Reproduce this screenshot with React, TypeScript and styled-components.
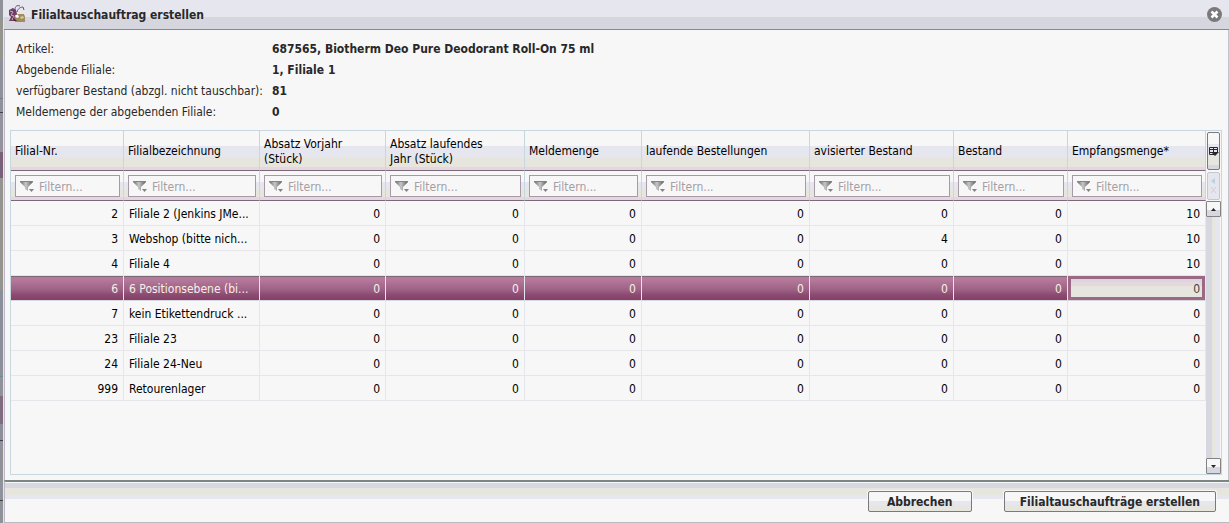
import React from 'react';
import styled, { createGlobalStyle, css } from 'styled-components';

const Global = createGlobalStyle`
  *, *::before, *::after { box-sizing: border-box; }
  body { margin: 0; background: #8e929a; }
  body, input, button { font-family: Tahoma, "DejaVu Sans Condensed", "Noto Sans", sans-serif; font-size: 12px; color: #000; }
  svg { flex: none; }
`;

const Backdrop = styled.div`
  display: flex;
  min-height: 100vh;
  padding-left: 3px;
  background: linear-gradient(
    #8f9299 0 20px, #94958c 20px 60px, #8f9299 60px 98px, #777a86 98px 99px, #8f9299 99px 112px, #3f4046 112px 113px,
    #94929c 113px 152px, #7a5f78 152px 178px, #94958f 178px 290px, #8b8f99 290px 376px, #6c8a94 376px 377px, #8f9299 377px 396px,
    #7f6c80 396px 424px, #8b8f99 424px 440px, #3f4046 440px 441px, #8f9299 441px 500px, #3f4046 500px 501px, #8f9299 501px
  );
`;
const Dialog = styled.section`
  flex: 1;
  min-width: 0;
  display: flex;
  flex-direction: column;
  border-left: 1px solid #e6e6ea;
  background: #f7f7f7;
`;
const TitleBar = styled.header`
  display: flex;
  align-items: center;
  gap: 5px;
  height: 30px;
  flex: none;
  padding: 0 7px 1px 4px;
  background: linear-gradient(#e6e6ef 0 17px, #d6d6df 17px);
  border-bottom: 1px solid #7b8e94;
`;
const Title = styled.h1`
  flex: 1;
  margin: 0;
  padding-top: 1px;
  font-size: 12px;
  line-height: 16px;
  font-weight: bold;
  color: #292829;
`;
const CloseButton = styled.button`
  padding: 0;
  border: 0;
  background: none;
  display: flex;
`;
const Body = styled.div`
  flex: 1;
  display: flex;
  flex-direction: column;
  padding: 9px 6px 5px 5px;
  border-left: 1px solid #bdb6c6;
  border-right: 1px solid #c6c3ce;
`;
const Facts = styled.dl`
  display: grid;
  grid-template-columns: 256px 1fr;
  margin: 0 0 7px 6px;
  line-height: 21px;
  color: #292829;
`;
const Term = styled.dt`white-space: nowrap;`;
const Detail = styled.dd`margin: 0; font-weight: bold;`;

const GridFrame = styled.div`
  flex: 1;
  display: flex;
  border: 1px solid #c6d7e0;
`;
const Table = styled.table`
  flex: 1;
  align-self: flex-start;
  width: 100%;
  min-width: 0;
  table-layout: fixed;
  border-collapse: separate;
  border-spacing: 0;
`;
const HeadCell = styled.th`
  height: 40px;
  padding: 2px 24px 0 4px;
  text-align: left;
  font-weight: normal;
  line-height: 15px;
  border-right: 1px solid #c6d7e0;
  border-bottom: 1px solid #7b697b;
  background: linear-gradient(#f7f7f7 0 15px, #e6e6ef 15px 26px, #e6e6de 26px 36px, #e6d7de 36px);
  &:last-child { padding-right: 4px; }
`;
const FilterCell = styled.td`
  height: 30px;
  padding: 1px 3px 0 4px;
  border-right: 1px solid #c6d7e0;
  border-bottom: 1px solid #7b697b;
  background: linear-gradient(#f7f7f7 0 11px, #e6e6ef 11px 18px, #e6e6de 18px 26px, #e6d7de 26px);
`;
const FilterBox = styled.label`
  display: flex;
  align-items: center;
  gap: 4px;
  height: 22px;
  padding-left: 4px;
  border: 1px solid #a59aa5;
  background: #f7f7f7;
`;
const FilterInput = styled.input`
  flex: 1;
  min-width: 0;
  padding: 1px 0 0;
  border: 0;
  outline: 0;
  background: none;
  &::placeholder { color: #a59ea5; opacity: 1; }
`;
const Row = styled.tr<{ $selected?: boolean }>`
  ${p => p.$selected && css`
    td { color: #f7efe6; background: linear-gradient(#7b6973 0 1px, #b5799c 1px 4px, #ad7194 7px, #9c6184 14px, #8c4973 19px, #844163 24px); border-bottom-color: #d6d7df; }
  `}
`;
const Cell = styled.td<{ $num?: boolean }>`
  height: 25px;
  padding: 2px 5px 0;
  line-height: 16px;
  text-align: ${p => (p.$num ? 'right' : 'left')};
  white-space: nowrap;
  border-right: 1px solid #e6e6ef;
  border-bottom: 1px solid #e6e6ea;
`;
const EditCell = styled(Cell)`padding: 0;`;
const EditInput = styled.input`
  display: block;
  width: 100%;
  height: 24px;
  padding: 1px 2px 0;
  text-align: right;
  border: 3px solid #9c6984;
  border-radius: 0;
  outline: 0;
  color: #424142;
  background: linear-gradient(#d6d7df 0 3px, #e6d7de 3px 7px, #e6e6de 7px);
`;
const Side = styled.div`
  display: flex;
  flex-direction: column;
  align-items: center;
  width: 15px;
  flex: none;
`;
const SideButton = styled.button<{ $h: number }>`
  display: flex;
  align-items: center;
  justify-content: center;
  flex: none;
  width: 13px;
  height: ${p => p.$h}px;
  margin: 1px 0;
  padding: 0;
  border: 1px solid #7b797b;
  border-radius: 2px;
  background: linear-gradient(#f7f7f7 0 30%, #e6e6ef 30% 60%, #e6e6de 60% 90%, #d6d7df 90%);
  &:disabled { border-color: #c6c7ce; background: #e6e6ef; }
`;
const ScrollButton = styled.button`
  display: flex;
  align-items: center;
  justify-content: center;
  width: 15px;
  height: 16px;
  padding: 0;
  border: 1px solid #848284;
  border-radius: 1px;
  background: linear-gradient(#f7f7f7 60%, #d6d7df 60%);
`;
const Track = styled.div`
  flex: 1;
  width: 15px;
  background: linear-gradient(90deg, #d6d7df 0 6px, #e6e6de 6px 9px, #e6e6ef 9px 14px, #f7f7f7 14px);
`;
const Footer = styled.footer`
  display: flex;
  justify-content: flex-end;
  gap: 32px;
  height: 43px;
  padding: 9px 13px 0;
  border-top: 2px solid #7b8684;
  border-bottom: 1px solid #bdb6bd;
  border-left: 1px solid #bdb6c6;
  background: linear-gradient(#f7f7f7 0 1px, #d6d7df 1px 6px, #e6e6de 6px 13px, #e6e6ef 13px 17px, #f7f7f7 17px);
`;
const ActionButton = styled.button`
  height: 21px;
  min-width: 104px;
  padding: 0 15px;
  font-weight: bold;
  line-height: 16px;
  color: #292829;
  border: 1px solid #7b797b;
  border-radius: 2px;
  box-shadow: 0 0 0 1px #f7f7f7;
  background: linear-gradient(#f7f7f7 0 9px, #e6e6ef 9px 13px, #e6e6de 13px);
`;

const Logo = () => (
  <svg width="18" height="18" viewBox="0 0 18 18" aria-hidden="true">
    <path d="M1 5l4-2 3 2 1 4-2 4-1 3H1l2-4-2-2z" fill="#6d3d66" />
    <path d="M2 6l3 1-2 3 3 1-2 4" fill="none" stroke="#c7a9c4" />
    <path d="M7 5c0-4 2-5 5-4M9 7c1-4 4-5 6-5l1 3" fill="none" stroke="#75466f" />
    <path d="M7 10l4-1 5 0 1 3v5H7l-1-3z" fill="#a18b5b" />
    <path d="M8 10l2 0 1 2-2 1-2-2z" fill="#fff" />
    <path d="M12 12l3-1 1 2-3 1z" fill="#d8c79a" />
    <path d="M5 12l4 4H6z" fill="#54264e" />
  </svg>
);
const Close = () => (
  <svg width="15" height="15" viewBox="0 0 15 15" aria-hidden="true">
    <circle cx="7.5" cy="7.5" r="7.5" fill="#7b797b" />
    <path d="M4.5 4.5l6 6M10.5 4.5l-6 6" stroke="#fff" strokeWidth="2.6" />
  </svg>
);
const Funnel = () => (
  <svg width="15" height="14" viewBox="0 0 15 14" aria-hidden="true">
    <defs>
      <linearGradient id="funnel"><stop offset="0" stopColor="#6b696b" /><stop offset=".45" stopColor="#c6c7c6" /><stop offset="1" stopColor="#5a595a" /></linearGradient>
    </defs>
    <path d="M0 2h13v1L8 8v4L5 10V8L0 3z" fill="url(#funnel)" />
    <path d="M0 2.500h13" stroke="#848284" />
    <path d="M9 10h5l-2.500 3z" fill="#848284" />
  </svg>
);
const ColumnsIcon = () => (
  <svg width="11" height="11" viewBox="0 0 11 11" aria-hidden="true">
    <path d="M6 8.500H1.500v-7h8V6M1 3.500h9M5.500 1v6M1 6.500h4" fill="none" stroke="#292829" />
    <path d="M3 6h8L7 10z" fill="#292829" />
  </svg>
);
const ClearIcon = () => (
  <svg width="7" height="18" viewBox="0 0 7 18" aria-hidden="true">
    <path d="M5 1v6L1 4z" fill="#b5d3de" />
    <path d="M1 10l5 6M6 10l-5 6" stroke="#cecfd6" />
  </svg>
);
const Arrow = ({ down }: { down?: boolean }) => (
  <svg width="5" height="3" viewBox="0 0 5 3" aria-hidden="true">
    <path d={down ? 'M0 0h5L2.500 3z' : 'M0 3h5L2.500 0z'} fill="#292829" />
  </svg>
);

const columns = [
  { label: 'Filial-Nr.', w: 113 },
  { label: 'Filialbezeichnung', w: 136 },
  { label: 'Absatz Vorjahr (Stück)', w: 126 },
  { label: 'Absatz laufendes Jahr (Stück)', w: 139 },
  { label: 'Meldemenge', w: 117 },
  { label: 'laufende Bestellungen', w: 168 },
  { label: 'avisierter Bestand', w: 144 },
  { label: 'Bestand', w: 114 },
  { label: 'Empfangsmenge*', w: 138 },
];
const total = columns.reduce((s, c) => s + c.w, 0);

const rows: [number, string, number, number][] = [
  [2, 'Filiale 2 (Jenkins JMe...', 0, 10],
  [3, 'Webshop (bitte nich...', 4, 10],
  [4, 'Filiale 4', 0, 10],
  [6, '6 Positionsebene (bi...', 0, 0],
  [7, 'kein Etikettendruck ...', 0, 0],
  [23, 'Filiale 23', 0, 0],
  [24, 'Filiale 24-Neu', 0, 0],
  [999, 'Retourenlager', 0, 0],
];

export default function App() {
  return (
    <>
      <Global />
      <Backdrop>
        <Dialog>
          <TitleBar>
            <Logo />
            <Title>Filialtauschauftrag erstellen</Title>
            <CloseButton aria-label="Schließen"><Close /></CloseButton>
          </TitleBar>
          <Body>
            <Facts>
              <Term>Artikel:</Term><Detail>687565, Biotherm Deo Pure Deodorant Roll-On 75 ml</Detail>
              <Term>Abgebende Filiale:</Term><Detail>1, Filiale 1</Detail>
              <Term>verfügbarer Bestand (abzgl. nicht tauschbar):</Term><Detail>81</Detail>
              <Term>Meldemenge der abgebenden Filiale:</Term><Detail>0</Detail>
            </Facts>
            <GridFrame>
              <Table>
                <colgroup>
                  {columns.map(c => <col key={c.label} style={{ width: `${(c.w / total) * 100}%` }} />)}
                </colgroup>
                <thead>
                  <tr>{columns.map(c => <HeadCell key={c.label} scope="col">{c.label}</HeadCell>)}</tr>
                  <tr>
                    {columns.map(c => (
                      <FilterCell key={c.label}>
                        <FilterBox><Funnel /><FilterInput placeholder="Filtern..." aria-label={`${c.label} filtern`} /></FilterBox>
                      </FilterCell>
                    ))}
                  </tr>
                </thead>
                <tbody>
                  {rows.map(([nr, name, advised, amount]) => {
                    const selected = nr === 6;
                    return (
                      <Row key={nr} $selected={selected}>
                        <Cell $num>{nr}</Cell>
                        <Cell>{name}</Cell>
                        {[0, 0, 0, 0, advised, 0].map((v, i) => <Cell key={i} $num>{v}</Cell>)}
                        {selected
                          ? <EditCell><EditInput defaultValue={amount} aria-label="Empfangsmenge" /></EditCell>
                          : <Cell $num>{amount}</Cell>}
                      </Row>
                    );
                  })}
                </tbody>
              </Table>
              <Side>
                <SideButton $h={38} aria-label="Spalten"><ColumnsIcon /></SideButton>
                <SideButton $h={28} disabled aria-label="Filter löschen"><ClearIcon /></SideButton>
                <ScrollButton aria-label="Nach oben"><Arrow /></ScrollButton>
                <Track />
                <ScrollButton aria-label="Nach unten"><Arrow down /></ScrollButton>
              </Side>
            </GridFrame>
          </Body>
          <Footer>
            <ActionButton>Abbrechen</ActionButton>
            <ActionButton>Filialtauschaufträge erstellen</ActionButton>
          </Footer>
        </Dialog>
      </Backdrop>
    </>
  );
}
